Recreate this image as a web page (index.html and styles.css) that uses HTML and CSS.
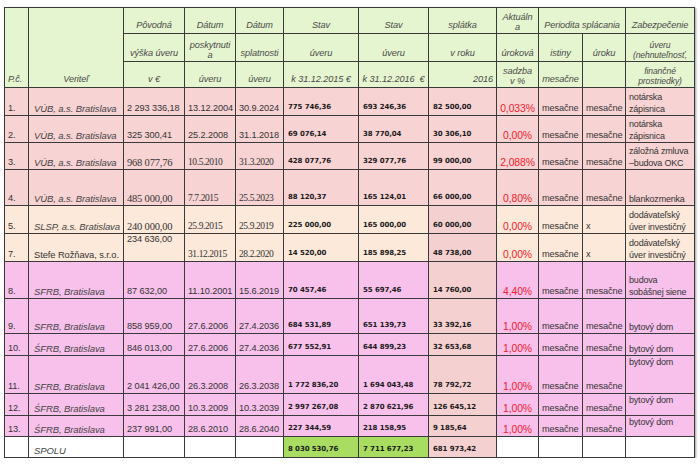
FILE: index.html
```html
<!DOCTYPE html>
<html lang="sk">
<head>
<meta charset="utf-8">
<title>Úvery</title>
<link rel="stylesheet" href="styles.css">
</head>
<body>
<table class="loans">
  <colgroup>
    <col class="c-no"><col class="c-name"><col class="c-amt"><col class="c-d1"><col class="c-d2">
    <col class="c-s1"><col class="c-s2"><col class="c-spl"><col class="c-pct"><col class="c-ist"><col class="c-uro"><col class="c-zab">
  </colgroup>
  <thead>
    <tr class="h1">
      <th rowspan="3" class="th-left">P.č.</th>
      <th rowspan="3">Veriteľ</th>
      <th>Pôvodná</th>
      <th>Dátum</th>
      <th>Dátum</th>
      <th>Stav</th>
      <th>Stav</th>
      <th>splátka</th>
      <th class="tight">Aktuáln<br>a</th>
      <th colspan="2">Periodita splácania</th>
      <th>Zabezpečenie</th>
    </tr>
    <tr class="h2">
      <th>výška úveru</th>
      <th class="tight">poskytnuti<br>a</th>
      <th>splatnosti</th>
      <th>úveru</th>
      <th>úveru</th>
      <th>v roku</th>
      <th>úroková</th>
      <th>istiny</th>
      <th>úroku</th>
      <th class="tight small">úveru<br>(nehnuteľnosť,</th>
    </tr>
    <tr class="h3">
      <th>v €</th>
      <th>úveru</th>
      <th>úveru</th>
      <th>k 31.12.2015 €</th>
      <th>k 31.12.2016&nbsp;&nbsp;€</th>
      <th class="th-right">2016</th>
      <th class="tight">sadzba<br>v %</th>
      <th>mesačne</th>
      <th></th>
      <th class="tight small">finančné<br>prostriedky)</th>
    </tr>
  </thead>
  <tbody>
    <tr class="pink r28">
      <td>1.</td><td class="name">VÚB, a.s. Bratislava</td><td>2 293 336,18</td><td>13.12.2004</td><td>30.9.2024</td>
      <td class="b">775 746,36</td><td class="b">693 246,36</td><td class="b">82 500,00</td><td class="pct">0,033%</td>
      <td>mesačne</td><td>mesačne</td><td class="zab">notárska<br>zápisnica</td>
    </tr>
    <tr class="pink r27">
      <td>2.</td><td class="name">VÚB, a.s. Bratislava</td><td>325 300,41</td><td>25.2.2008</td><td>31.1.2018</td>
      <td class="b">69 076,14</td><td class="b">38 770,04</td><td class="b">30 306,10</td><td class="pct">0,00%</td>
      <td>mesačne</td><td>mesačne</td><td class="zab">notárska<br>zápisnica</td>
    </tr>
    <tr class="pink r27">
      <td>3.</td><td class="name">VÚB, a.s. Bratislava</td><td class="serif">968 077,76</td><td class="serif date">10.5.2010</td><td class="serif date">31.3.2020</td>
      <td class="b">428 077,76</td><td class="b">329 077,76</td><td class="b">99 000,00</td><td class="pct">2,088%</td>
      <td>mesačne</td><td>mesačne</td><td class="zab">záložná zmluva<br>–budova OKC</td>
    </tr>
    <tr class="pink r36">
      <td>4.</td><td class="name">VÚB, a.s. Bratislava</td><td class="serif">485 000,00</td><td class="serif date">7.7.2015</td><td class="serif date">25.5.2023</td>
      <td class="b">88 120,37</td><td class="b">165 124,01</td><td class="b">66 000,00</td><td class="pct">0,80%</td>
      <td>mesačne</td><td>mesačne</td><td class="zab">blankozmenka</td>
    </tr>
    <tr class="peach r28">
      <td>5.</td><td class="name">SLSP, a.s. Bratislava</td><td class="serif">240 000,00</td><td class="serif date">25.9.2015</td><td class="serif date">25.9.2019</td>
      <td class="b">225 000,00</td><td class="b">165 000,00</td><td class="b spl">60 000,00</td><td class="pct">0,00%</td>
      <td>mesačne</td><td>x</td><td class="zab">dodávateľský<br>úver investičný</td>
    </tr>
    <tr class="peach r28">
      <td>7.</td><td class="plain">Stefe Rožňava, s.r.o.</td><td class="top">234 636,00</td><td class="serif date">31.12.2015</td><td class="serif date">28.2.2020</td>
      <td class="b">14 520,00</td><td class="b">185 898,25</td><td class="b spl">48 738,00</td><td class="pct">0,00%</td>
      <td>mesačne</td><td>x</td><td class="zab">dodávateľský<br>úver investičný</td>
    </tr>
    <tr class="mag r37">
      <td>8.</td><td class="name">SFRB, Bratislava</td><td>87 632,00</td><td>11.10.2001</td><td>15.6.2019</td>
      <td class="b">70 457,46</td><td class="b">55 697,46</td><td class="b spl">14 760,00</td><td class="pct">4,40%</td>
      <td>mesačne</td><td>mesačne</td><td class="zab">budova<br>sobášnej siene</td>
    </tr>
    <tr class="mag r35">
      <td>9.</td><td class="name">SFRB, Bratislava</td><td>858 959,00</td><td>27.6.2006</td><td>27.4.2036</td>
      <td class="b">684 531,89</td><td class="b">651 139,73</td><td class="b spl">33 392,16</td><td class="pct">1,00%</td>
      <td>mesačne</td><td>mesačne</td><td class="zab">bytový dom</td>
    </tr>
    <tr class="mag r22">
      <td>10.</td><td class="name">ŚFRB, Bratislava</td><td>846 013,00</td><td>27.6.2006</td><td>27.4.2036</td>
      <td class="b">677 552,91</td><td class="b">644 899,23</td><td class="b spl">32 653,68</td><td class="pct">1,00%</td>
      <td>mesačne</td><td>mesačne</td><td class="zab">bytový dom</td>
    </tr>
    <tr class="mag r38">
      <td>11.</td><td class="name">SFRB, Bratislava</td><td>2 041 426,00</td><td>26.3.2008</td><td>26.3.2038</td>
      <td class="b">1 772 836,20</td><td class="b">1 694 043,48</td><td class="b spl">78 792,72</td><td class="pct">1,00%</td>
      <td>mesačne</td><td>mesačne</td><td class="zab top">bytový dom</td>
    </tr>
    <tr class="mag r22">
      <td>12.</td><td class="name">ŚFRB, Bratislava</td><td>3 281 238,00</td><td>10.3.2009</td><td>10.3.2039</td>
      <td class="b">2 997 267,08</td><td class="b">2 870 621,96</td><td class="b spl">126 645,12</td><td class="pct">1,00%</td>
      <td>mesačne</td><td>mesačne</td><td class="zab top">bytový dom</td>
    </tr>
    <tr class="mag r21">
      <td>13.</td><td class="name">ŚFRB, Bratislava</td><td>237 991,00</td><td>28.6.2010</td><td>28.6.2040</td>
      <td class="b">227 344,59</td><td class="b">218 158,95</td><td class="b spl">9 185,64</td><td class="pct">1,00%</td>
      <td>mesačne</td><td>mesačne</td><td class="zab top">bytový dom</td>
    </tr>
    <tr class="total r21">
      <td></td><td class="name">SPOLU</td><td></td><td></td><td></td>
      <td class="b sum">8 030 530,76</td><td class="b sum">7 711 677,23</td><td class="b spl">681 973,42</td><td></td>
      <td></td><td></td><td></td>
    </tr>
  </tbody>
</table>
</body>
</html>
```

FILE: styles.css
```css
html, body {
  margin: 0;
  padding: 0;
  background: #ffffff;
}

body {
  font-family: "Liberation Sans", Arial, sans-serif;
  color: #333333;
}

.loans {
  margin: 7px 0 0 4px;
  border-collapse: collapse;
  table-layout: fixed;
  width: 690px;
  box-shadow: 1px 1px 2px #9a9a9a;
}

.c-no { width: 24px; }
.c-name { width: 95px; }
.c-amt { width: 61px; }
.c-d1 { width: 51px; }
.c-d2 { width: 48px; }
.c-s1 { width: 75px; }
.c-s2 { width: 70px; }
.c-spl { width: 68px; }
.c-pct { width: 42px; }
.c-ist { width: 44px; }
.c-uro { width: 43px; }
.c-zab { width: 69px; }

.loans th,
.loans td {
  border: 1px solid #3a3a3a;
  padding: 0 0 1px 3px;
  vertical-align: bottom;
  white-space: nowrap;
  overflow: hidden;
  font-size: 9.2px;
  line-height: 11px;
  letter-spacing: -0.1px;
}

.loans thead th {
  background: #e5f5d0;
  font-style: italic;
  font-weight: normal;
  color: #4a4a4a;
  text-align: center;
  padding: 0 0 2px 0;
}

.loans thead th.th-left {
  text-align: left;
  padding-left: 3px;
}

.loans thead th.th-right {
  text-align: right;
  padding-right: 3px;
}

.loans thead th.tight {
  line-height: 10px;
  padding-bottom: 1px;
}

.loans thead th.small {
  font-size: 8.6px;
}

.h1 { height: 26px; }
.h2 { height: 28px; }
.h3 { height: 26px; }

.r21 { height: 21px; }
.r22 { height: 22px; }
.r27 { height: 27px; }
.r28 { height: 28px; }
.r35 { height: 35px; }
.r36 { height: 36px; }
.r37 { height: 37px; }
.r38 { height: 38px; }

.pink td { background: #f8d3d4; }
.peach td { background: #fde9da; }
.mag td { background: #f8c1ec; }
.total td { background: #ffffff; }

.loans td.spl { background: #f4d0d0; }
.loans td.sum { background: #a9dd62; }

.loans td.name {
  font-style: italic;
  font-size: 9.5px;
  padding-left: 5px;
  color: #444444;
}

.loans td.plain {
  padding-left: 5px;
  font-size: 9.4px;
}

.loans td.serif {
  font-family: "Liberation Serif", "Times New Roman", serif;
  font-size: 10.5px;
  letter-spacing: -0.2px;
}

.loans td.serif.date {
  font-size: 9.5px;
  letter-spacing: -0.4px;
}

.loans td.top {
  vertical-align: top;
}

.loans td.b {
  font-family: "DejaVu Sans", Verdana, sans-serif;
  font-weight: bold;
  font-size: 7px;
  letter-spacing: -0.1px;
  color: #1a1a1a;
  padding-left: 4px;
  padding-bottom: 2px;
}

.loans td.pct {
  color: #f01c2c;
  text-align: center;
  font-size: 10.4px;
  padding-left: 0;
}

.loans td.zab {
  line-height: 12px;
  padding-left: 3px;
  padding-bottom: 0;
  font-size: 9px;
  letter-spacing: -0.2px;
}
```
